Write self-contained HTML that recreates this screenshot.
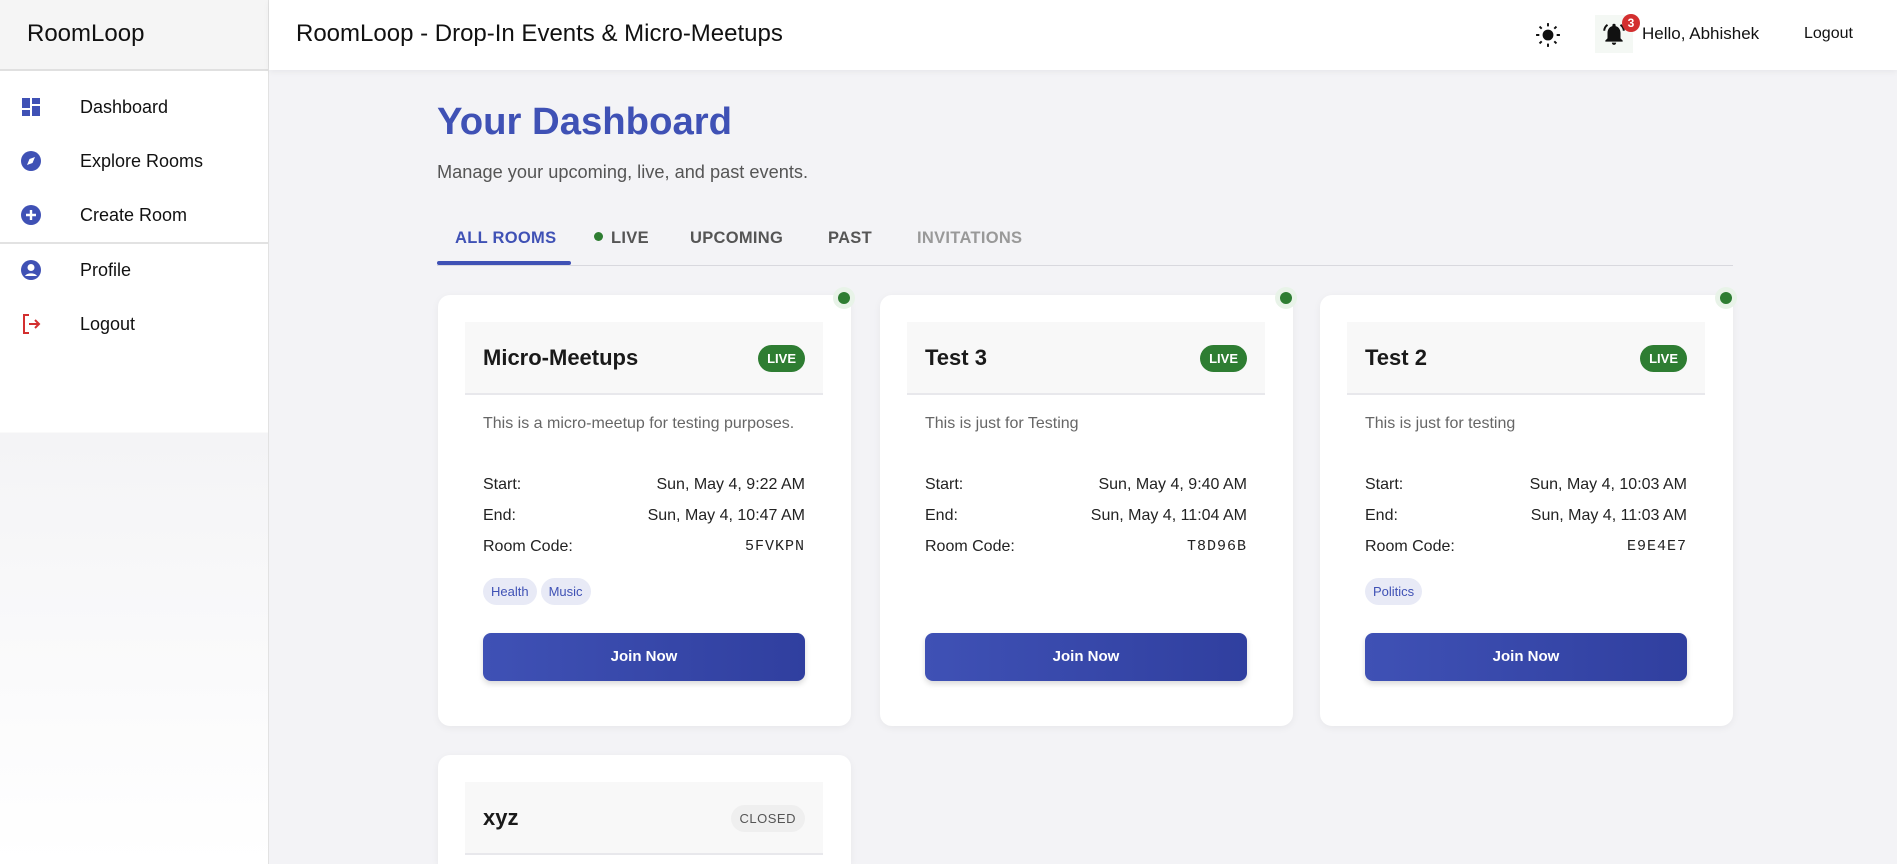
<!DOCTYPE html>
<html style="overflow:hidden;height:864px"><head><meta charset="utf-8"><style>
*{box-sizing:border-box;margin:0;padding:0}
body{width:1897px;height:864px;overflow:hidden;font-family:"Liberation Sans",Arial,sans-serif;background:#f3f3f6;position:relative;color:#222}
.sb{position:absolute;left:0;top:0;width:269px;height:864px;background:linear-gradient(#fff 0,#fff 432px,#f4f4f6 433px,#fff 864px);border-right:1px solid #e2e2e2}
.sbh{height:71px;background:#f5f5f5;border-bottom:2px solid #e0e0e0;font-size:24px;padding:20px 0 0 27px;color:#111}
.it{position:absolute;left:0;height:40px;display:flex;align-items:center;font-size:18px;color:#111}
.it svg{position:absolute;left:19px;width:24px;height:24px}
.it span{position:absolute;left:80px;white-space:nowrap}
.hd{position:absolute;left:269px;top:0;right:0;height:70px;background:#fff;box-shadow:0 2px 6px rgba(0,0,0,.05)}
.ttl{position:absolute;left:27px;top:20px;font-size:24px;color:#111}
h1{position:absolute;left:437px;top:100px;font-size:38.3px;color:#3f51b5;font-weight:bold}
.sub{position:absolute;left:437px;top:162px;font-size:18.2px;color:#555}
.tabs{position:absolute;left:437px;top:265px;width:1296px;border-top:1px solid #d8d8de}
.tab{position:absolute;top:229px;font-size:16.5px;font-weight:bold;color:#555;letter-spacing:.3px}
.card{position:absolute;width:413px;background:#fff;border-radius:12px;box-shadow:0 2px 8px rgba(0,0,0,.05)}
.ch{position:absolute;left:27px;top:27px;width:358px;height:73px;background:#f8f8f8;border-bottom:2px solid #e8e8ec}
.ch b{position:absolute;left:18px;top:23px;font-size:22px;color:#1a1a1a}
.badge{position:absolute;right:18px;top:23px;height:27px;padding:0 9px;border-radius:14px;background:#2e7d32;color:#fff;font-size:13px;font-weight:bold;line-height:27px}
.dot{position:absolute;right:-4px;top:-8px;width:22px;height:22px;border-radius:50%;background:#e8f3e8}
.dot:after{content:"";position:absolute;left:5px;top:5px;width:12px;height:12px;border-radius:50%;background:#2e7d32}
.desc{position:absolute;left:45px;top:120px;font-size:16px;color:#666}
.row{position:absolute;left:45px;width:322px;font-size:16px;color:#222;display:flex;justify-content:space-between}
.mono{font-family:"Liberation Mono",monospace;font-size:15px;letter-spacing:1px}
.tag{display:inline-block;height:27px;line-height:27px;padding:0 8px;border-radius:14px;background:#e8eaf6;color:#3f51b5;font-size:13px;margin-right:4px}
.tags{position:absolute;left:45px;top:283px}
.btn{position:absolute;left:45px;top:338px;width:322px;height:48px;border-radius:8px;background:linear-gradient(90deg,#3f51b5,#303f9f);color:#fff;font-weight:bold;font-size:15px;text-align:center;line-height:48px;box-shadow:0 3px 6px rgba(0,0,0,.15)}
</style></head><body>
<div class="sb">
<div class="sbh">RoomLoop</div>
<div class="it" style="top:87px"><svg viewBox="0 0 24 24"><path fill="#3f51b5" d="M3 13h8V3H3zm0 8h8v-6H3zm10 0h8V11h-8zm0-18v6h8V3z"/></svg><span>Dashboard</span></div>
<div class="it" style="top:141px"><svg viewBox="0 0 24 24"><circle cx="12" cy="12" r="10" fill="#3f51b5"/><path d="M16 8l-2.5 6L8 16l2.5-6z" fill="#fff"/></svg><span>Explore Rooms</span></div>
<div class="it" style="top:195px"><svg viewBox="0 0 24 24"><circle cx="12" cy="12" r="10" fill="#3f51b5"/><path d="M12 7v10M7 12h10" stroke="#fff" stroke-width="2.4"/></svg><span>Create Room</span></div>
<div style="position:absolute;left:0;top:242px;width:268px;border-top:2px solid #e2e2e2"></div>
<div class="it" style="top:250px"><svg viewBox="0 0 24 24"><circle cx="12" cy="12" r="10" fill="#3f51b5"/><circle cx="12" cy="9.5" r="3.5" fill="#fff"/><path d="M6 18c2-3.5 10-3.5 12 0" fill="#fff"/></svg><span>Profile</span></div>
<div class="it" style="top:304px"><svg viewBox="0 0 24 24"><path d="M10 3H5v18h5M10 12h10M16 8l4 4-4 4" fill="none" stroke="#d32f2f" stroke-width="2"/></svg><span>Logout</span></div>
</div>
<div class="hd">
<div class="ttl">RoomLoop - Drop-In Events &amp; Micro-Meetups</div>
<svg style="position:absolute;left:1266px;top:22px" width="26" height="26" viewBox="0 0 24 24"><circle cx="12" cy="12" r="5" fill="#111"/><g stroke="#111" stroke-width="1.8"><path d="M12 1v3M12 20v3M1 12h3M20 12h3M4.2 4.2l2 2M17.8 17.8l2 2M4.2 19.8l2-2M17.8 6.2l2-2"/></g></svg>
<div style="position:absolute;left:1326px;top:15px;width:38px;height:38px;background:#f4f8f4"></div>
<svg style="position:absolute;left:1332px;top:20px" width="26" height="28" viewBox="0 0 24 24"><path d="M12 22a2 2 0 002-2h-4a2 2 0 002 2zm6-6v-5c0-3-1.6-5.6-4.5-6.3V4a1.5 1.5 0 00-3 0v.7C7.6 5.4 6 8 6 11v5l-2 2v1h16v-1z" fill="#111"/><path d="M3 9c0-2 1-4 3-5.5M21 9c0-2-1-4-3-5.5" stroke="#111" stroke-width="1.8" fill="none"/></svg>
<div style="position:absolute;left:1353px;top:14px;width:18px;height:18px;border-radius:50%;background:#d32f2f;color:#fff;font-size:12px;font-weight:bold;text-align:center;line-height:18px">3</div>
<div style="position:absolute;left:1373px;top:24px;font-size:17px;color:#111">Hello, Abhishek</div>
<div style="position:absolute;left:1535px;top:25px;font-size:16px;color:#111">Logout</div>
</div>
<h1>Your Dashboard</h1>
<div class="sub">Manage your upcoming, live, and past events.</div>
<div class="tabs"></div>
<div style="position:absolute;left:437px;top:261px;width:134px;height:4px;background:#3f51b5;border-radius:2px"></div>
<div class="tab" style="left:455px;color:#3f51b5">ALL ROOMS</div>
<div class="tab" style="left:594px;color:#555"><span style="display:inline-block;width:9px;height:9px;border-radius:50%;background:#2e7d32;margin-right:8px;vertical-align:2px"></span>LIVE</div>
<div class="tab" style="left:690px">UPCOMING</div>
<div class="tab" style="left:828px">PAST</div>
<div class="tab" style="left:917px;color:#999">INVITATIONS</div>

<div class="card" style="left:438px;top:295px;height:431px"><div class="dot"></div>
<div class="ch"><b>Micro-Meetups</b><span class="badge">LIVE</span></div>
<div class="desc">This is a micro-meetup for testing purposes.</div>
<div class="row" style="top:181px"><span>Start:</span><span>Sun, May 4, 9:22 AM</span></div>
<div class="row" style="top:212px"><span>End:</span><span>Sun, May 4, 10:47 AM</span></div>
<div class="row" style="top:243px"><span>Room Code:</span><span class="mono">5FVKPN</span></div>
<div class="tags"><span class="tag">Health</span><span class="tag">Music</span></div>
<div class="btn">Join Now</div></div>

<div class="card" style="left:880px;top:295px;height:431px"><div class="dot"></div>
<div class="ch"><b>Test 3</b><span class="badge">LIVE</span></div>
<div class="desc">This is just for Testing</div>
<div class="row" style="top:181px"><span>Start:</span><span>Sun, May 4, 9:40 AM</span></div>
<div class="row" style="top:212px"><span>End:</span><span>Sun, May 4, 11:04 AM</span></div>
<div class="row" style="top:243px"><span>Room Code:</span><span class="mono">T8D96B</span></div>
<div class="btn">Join Now</div></div>

<div class="card" style="left:1320px;top:295px;height:431px"><div class="dot"></div>
<div class="ch"><b>Test 2</b><span class="badge">LIVE</span></div>
<div class="desc">This is just for testing</div>
<div class="row" style="top:181px"><span>Start:</span><span>Sun, May 4, 10:03 AM</span></div>
<div class="row" style="top:212px"><span>End:</span><span>Sun, May 4, 11:03 AM</span></div>
<div class="row" style="top:243px"><span>Room Code:</span><span class="mono">E9E4E7</span></div>
<div class="tags"><span class="tag">Politics</span></div>
<div class="btn">Join Now</div></div>

<div class="card" style="left:438px;top:755px;height:109px;border-radius:12px 12px 0 0">
<div class="ch"><b>xyz</b><span class="badge" style="background:#efefef;color:#555;font-weight:normal;letter-spacing:.5px">CLOSED</span></div></div>
</body></html>
